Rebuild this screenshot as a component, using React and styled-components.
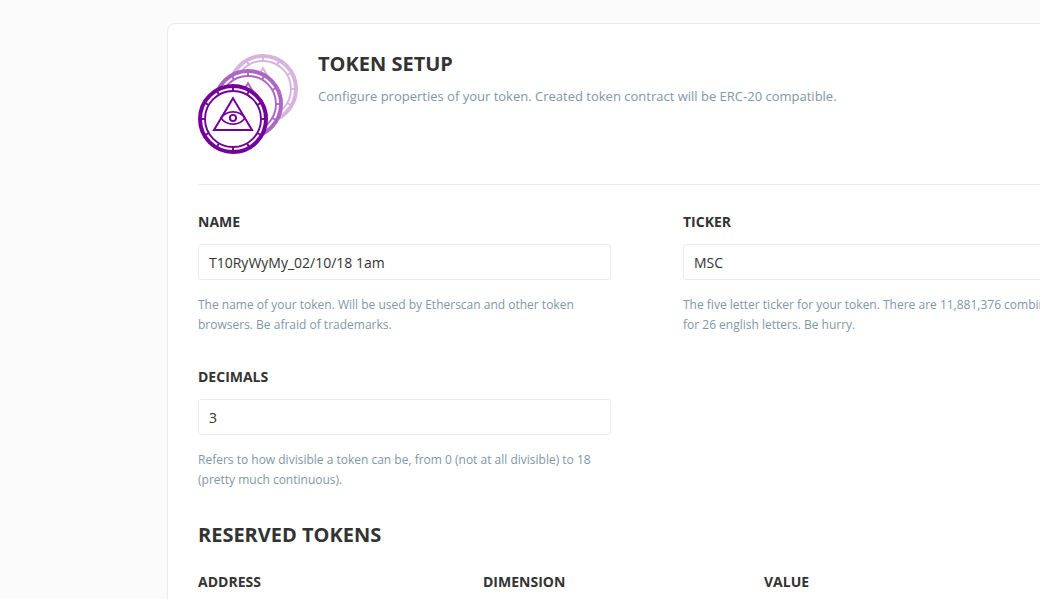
import React from "react";
import styled, { createGlobalStyle } from "styled-components";

const GlobalStyle = createGlobalStyle`
  * { box-sizing: border-box; }
  html { overflow: hidden; }
  body {
    margin: 0;
    background: #fbfbfb;
    color: #333;
    font-family: "Open Sans", "Noto Sans", sans-serif;
    overflow: hidden;
  }
`;

const Page = styled.main`
  height: 599px;
  padding: 23px 0 0 167px;
  overflow: hidden;
`;

const Card = styled.section`
  width: 1032px;
  min-height: 800px;
  padding: 30px;
  background: #fff;
  border: 1px solid #ebebeb;
  border-radius: 8px;
`;

const Header = styled.header`
  display: flex;
  gap: 20px;
  height: 131px;
  border-bottom: 1px solid #ebebeb;
`;

const CoinArt = styled.svg`
  flex: none;
  width: 100px;
  height: 100px;
`;

const Title = styled.h2`
  margin: 0;
  font-size: 20px;
  line-height: 20px;
  font-weight: 700;
  text-transform: uppercase;
`;

const Description = styled.p`
  margin: 12px 0 0;
  font-size: 13px;
  line-height: 20px;
  color: #8197a6;
`;

const Fields = styled.div`
  display: grid;
  grid-template-columns: 485px 485px;
  grid-auto-rows: 155px;
  padding-top: 27px;
`;

const Field = styled.label`
  display: block;
  width: 413px;
`;

const Label = styled.span`
  display: block;
  font-size: 14px;
  line-height: 20px;
  font-weight: 700;
  text-transform: uppercase;
`;

const Input = styled.input`
  display: block;
  width: 100%;
  height: 36px;
  margin: 12px 0 15px;
  padding: 1px 10px 0;
  border: 1px solid #ebebeb;
  border-radius: 3px;
  outline: none;
  background: #fff;
  color: #333;
  font: 400 14px "Open Sans", "Noto Sans", sans-serif;
`;

const Hint = styled.span`
  display: block;
  font-size: 12px;
  line-height: 20px;
  color: #8197a6;
`;

const Reserved = styled.section`
  padding-top: 3px;
`;

const Columns = styled.div`
  display: grid;
  grid-template-columns: 285px 281px 1fr;
  margin-top: 27px;
`;

const TICKS = [0, 30, 60, 90, 120, 150, 180, 210, 240, 270, 300, 330];

function Coin({ x, y, color }) {
  return (
    <g transform={`translate(${x} ${y})`} fill="none" stroke={color}>
      <circle r="33" fill="#fff" strokeWidth="4" />
      <circle r="28" strokeWidth="1.9" />
      {TICKS.map((angle) => (
        <path key={angle} d="M0-32V-28" strokeWidth="1.9" transform={`rotate(${angle})`} />
      ))}
      <path d="M0-20.8 19 11H-19Z" strokeWidth="2" />
      <path d="M-12-1C-6.5-9.2 6.5-9.2 12-1C6.5 7.2 -6.5 7.2 -12-1Z" strokeWidth="1.7" />
      <circle cy="-1" r="3.1" strokeWidth="1.9" />
    </g>
  );
}

function TextField({ label, value, hint }) {
  return (
    <Field>
      <Label>{label}</Label>
      <Input defaultValue={value} />
      <Hint>{hint}</Hint>
    </Field>
  );
}

export default function App() {
  return (
    <>
      <GlobalStyle />
      <Page>
        <Card>
          <Header>
            <CoinArt viewBox="0 0 100 100" aria-hidden="true">
              <Coin x={65} y={35} color="#d6b3e1" />
              <Coin x={50} y={50} color="#ad66c4" />
              <Coin x={35} y={65} color="#73009b" />
            </CoinArt>
            <div>
              <Title>Token setup</Title>
              <Description>
                Configure properties of your token. Created token contract will be ERC-20 compatible.
              </Description>
            </div>
          </Header>
          <Fields>
            <TextField
              label="Name"
              value="T10RyWyMy_02/10/18 1am"
              hint="The name of your token. Will be used by Etherscan and other token browsers. Be afraid of trademarks."
            />
            <TextField
              label="Ticker"
              value="MSC"
              hint="The five letter ticker for your token. There are 11,881,376 combinations for 26 english letters. Be hurry."
            />
            <TextField
              label="Decimals"
              value="3"
              hint="Refers to how divisible a token can be, from 0 (not at all divisible) to 18 (pretty much continuous)."
            />
          </Fields>
          <Reserved>
            <Title>Reserved tokens</Title>
            <Columns>
              <Label>Address</Label>
              <Label>Dimension</Label>
              <Label>Value</Label>
            </Columns>
          </Reserved>
        </Card>
      </Page>
    </>
  );
}
